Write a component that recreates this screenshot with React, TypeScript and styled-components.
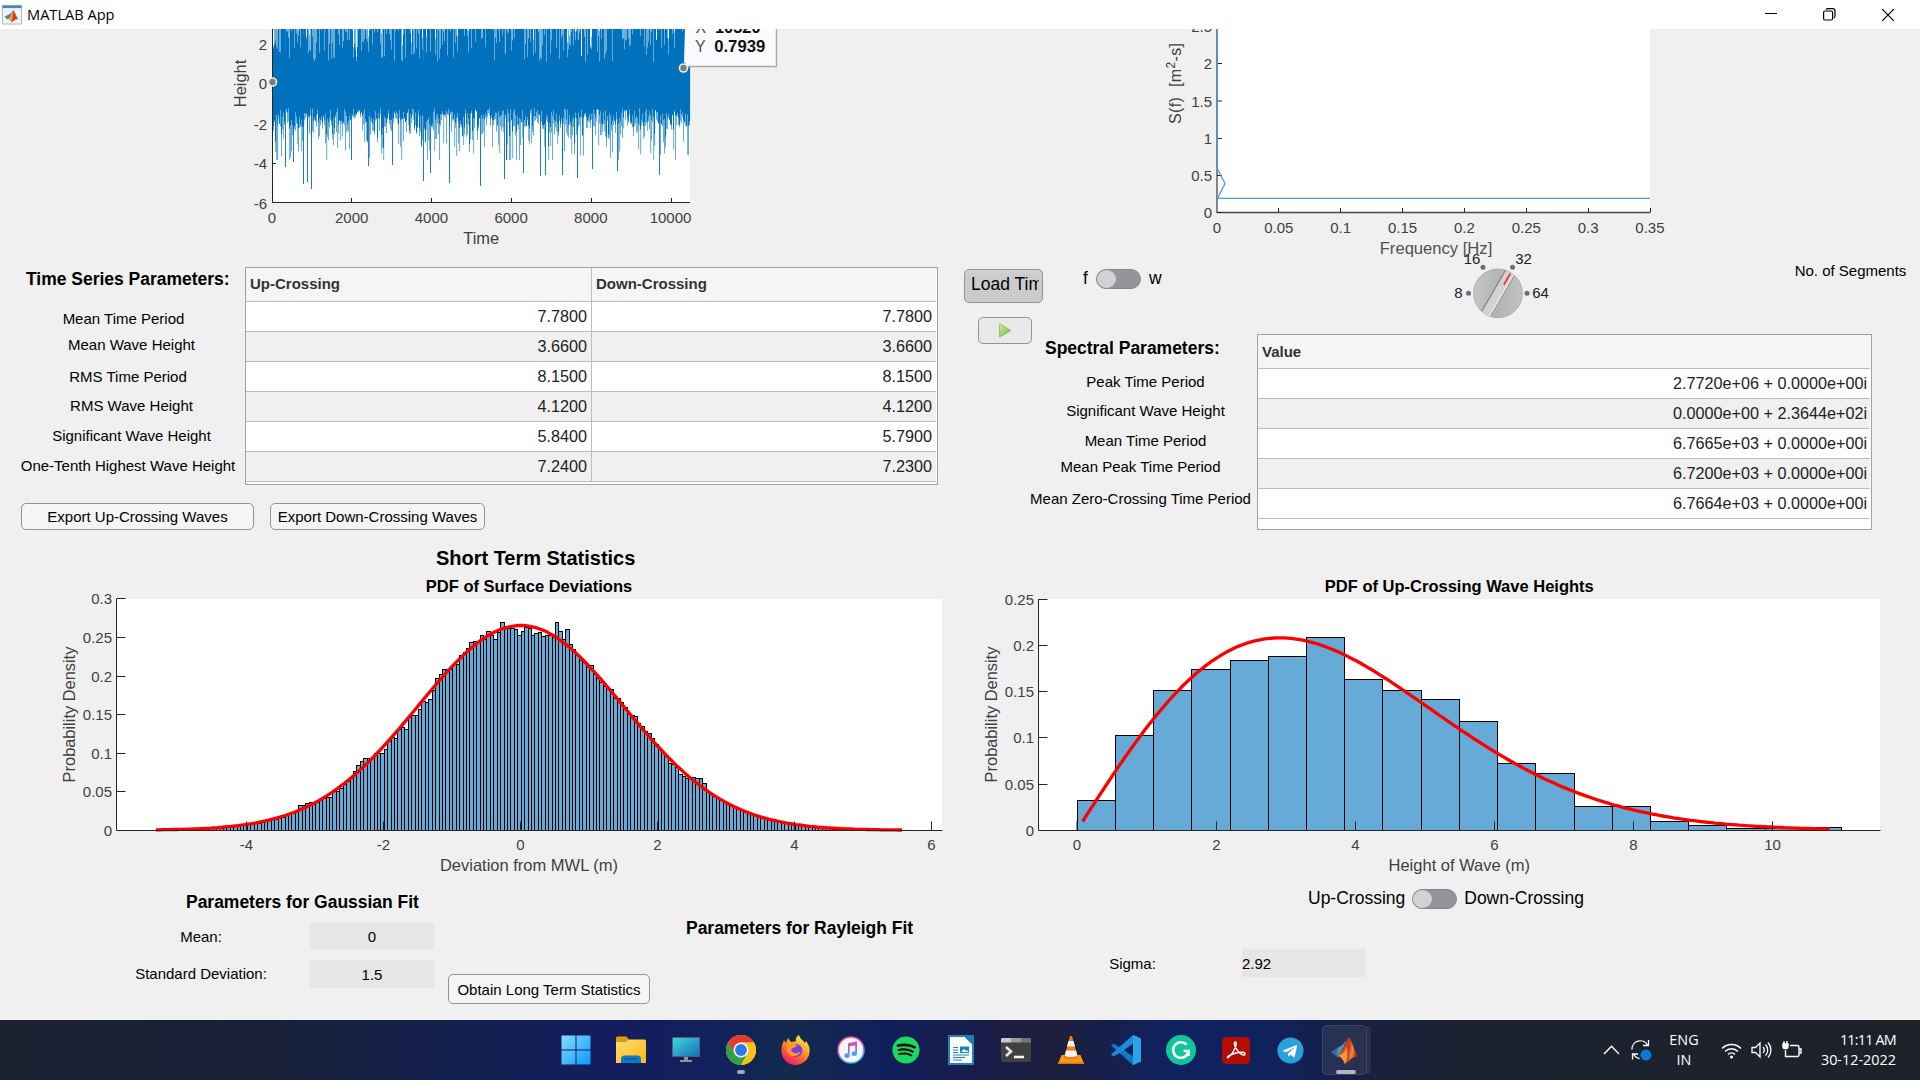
import React from "react";
import styled, { createGlobalStyle } from "styled-components";
import { FaSpotify, FaTelegram } from "react-icons/fa";

const Global = createGlobalStyle`
  * { box-sizing: border-box; }
  body { margin: 0; background: #f0f0f0; overflow: hidden; }
`;
const ARIAL = `"Liberation Sans", Arial, sans-serif`;
const SEGOE = `"Open Sans", "Noto Sans", sans-serif`;

const Screen = styled.div`
  width: 1920px; height: 1080px; display: flex; flex-direction: column;
  background: #f0f0f0; font-family: ${ARIAL}; font-size: 15px; color: #000; overflow: hidden;
`;
const TitleBar = styled.header`
  height: 29px; background: #fff; display: flex; align-items: center; padding-left: 2px;
  font-family: ${SEGOE}; font-size: 14.6px; flex: none; position: relative; z-index: 1;
`;
const TitleText = styled.span`margin-left: 5px; padding-bottom: 2px; letter-spacing: 0; flex: 1;`;
const WinButton = styled.span`width: 58.5px; height: 29px; display: flex; align-items: center; justify-content: center;`;
const Body = styled.main`height: 991px; display: flex; flex: none;`;
const Column = styled.section<{ $w: number }>`width: ${(p) => p.$w}px; display: flex; flex-direction: column; flex: none;`;
const Plot = styled.svg`display: block; overflow: visible; flex: none; font-family: ${ARIAL};`;
const Row = styled.div<{ $h?: number; $pl?: number; $pt?: number; $gap?: number }>`
  display: flex; align-items: flex-start; flex: none;
  height: ${(p) => (p.$h ? p.$h + "px" : "auto")};
  padding-left: ${(p) => p.$pl || 0}px; padding-top: ${(p) => p.$pt || 0}px; gap: ${(p) => p.$gap || 0}px;
`;
const Stack = styled.div<{ $w: number }>`width: ${(p) => p.$w}px; display: flex; flex-direction: column; flex: none;`;
const Heading = styled.h2<{ $size?: number; $mt?: number; $ml?: number }>`
  margin: ${(p) => p.$mt || 0}px 0 0 ${(p) => p.$ml || 0}px; font-weight: bold; white-space: nowrap;
  font-size: ${(p) => p.$size || 17.5}px; line-height: 24px; letter-spacing: -0.02px;
`;
const Label = styled.div<{ $w: number; $mt?: number }>`
  display: flex; justify-content: center; width: ${(p) => p.$w}px; margin-top: ${(p) => p.$mt || 0}px;
  line-height: 20px; white-space: nowrap;
`;
const LabelIndent = styled.span`width: 92px; flex: none;`;
const Table = styled.div<{ $w: number; $h: number; $cols: string; $lh: number; $pr: number }>`
  width: ${(p) => p.$w}px; height: ${(p) => p.$h}px; border: 1px solid #a2a2a2; background: #fff; flex: none;
  display: grid; grid-template-columns: ${(p) => p.$cols}; grid-template-rows: 34px; grid-auto-rows: 30px;
  overflow: hidden; padding-right: 1px; --head: ${(p) => p.$lh}px; --pad: ${(p) => p.$pr}px;
`;
const Th = styled.div<{ $last?: boolean }>`
  background: #f5f5f5; border-bottom: 1px solid #bdbdbd; border-right: ${(p) => (p.$last ? "0" : "1px solid #bdbdbd")};
  font-weight: bold; color: #333; font-size: 15px; line-height: var(--head); padding-left: 4px;
`;
const Td = styled.div<{ $alt: boolean; $last?: boolean }>`
  background: ${(p) => (p.$alt ? "#f0f0f0" : "#fff")}; border-bottom: 1px solid #bdbdbd;
  border-right: ${(p) => (p.$last ? "0" : "1px solid #bdbdbd")};
  text-align: right; color: #222; font-size: 16.2px; line-height: 28px; padding-right: var(--pad); white-space: nowrap;
`;
const Button = styled.button<{ $w: number; $h: number; $fs?: number; $bg?: string; $left?: boolean }>`
  width: ${(p) => p.$w}px; height: ${(p) => p.$h}px; border: 1px solid #949494; border-radius: 5px; flex: none;
  background: ${(p) => p.$bg || "#f5f5f5"}; font-family: ${ARIAL}; font-size: ${(p) => p.$fs || 15}px; color: #000;
  display: flex; align-items: center; justify-content: ${(p) => (p.$left ? "flex-start" : "center")};
  padding: 0 3px ${(p) => (p.$left ? 3 : 0)}px ${(p) => (p.$left ? 6 : 3)}px; white-space: nowrap; overflow: hidden;
`;
const Clip = styled.span`overflow: hidden; width: 69px; display: block; text-align: left;`;
const SwitchRow = styled.div<{ $gap: number }>`display: flex; align-items: center; gap: ${(p) => p.$gap}px; font-size: 17.5px; height: 20px; white-space: nowrap; line-height: 19px;`;
const SwitchText = styled.span`padding-bottom: 1px;`;
const Track = styled.span`
  width: 45px; height: 20px; border-radius: 10px; background: #949599; border: 1px solid #86878b; display: flex;
`;
const Thumb = styled.span`width: 19px; height: 18px; border-radius: 50%; background: #d1d2d4;`;
const Field = styled.div<{ $h: number; $left?: boolean }>`
  width: 124px; height: ${(p) => p.$h}px; background: #e6e6e6; line-height: ${(p) => p.$h + 1}px;
  text-align: ${(p) => (p.$left ? "left" : "center")};
`;
const Taskbar = styled.footer`
  height: 60px; flex: none; display: flex; align-items: center; padding-left: 548px; color: #fff;
  background: linear-gradient(90deg, #1b2130 0%, #182038 14%, #122053 26%, #131d5e 32%, #11225a 38%, #132a4c 41%, #101f5c 46%, #191c48 51%, #1d1e3c 55%, #0f2260 61%, #10225c 66%, #182040 71%, #1c2230 76%, #1d2229 100%);
  font-family: ${SEGOE}; font-size: 14.4px;
`;
const TaskItem = styled.span`
  width: 55px; height: 60px; display: flex; align-items: center; justify-content: center; flex: none; position: relative;
`;
const ActiveTile = styled.span`
  width: 45px; height: 50px; border-radius: 5px; background: rgba(255,255,255,0.08); margin-right: 2px;
  border: 1px solid rgba(255,255,255,0.1); display: flex; align-items: center; justify-content: center;
  box-shadow: 5px 0 0 -1px rgba(255,255,255,0.07);
`;
const Mark = styled.span<{ $w: number; $c: string }>`
  position: absolute; bottom: 6px; left: calc(50% - ${(p) => p.$w / 2}px); width: ${(p) => p.$w}px; height: 4px;
  border-radius: 2px; background: ${(p) => p.$c};
`;
const Tray = styled.div`display: flex; align-items: center; margin-left: 228px; height: 60px; svg { flex: none; }`;
const TrayText = styled.div<{ $w: number; $right?: boolean }>`
  width: ${(p) => p.$w}px; text-align: ${(p) => (p.$right ? "right" : "center")}; line-height: 20px; white-space: nowrap;
`;
const TrayCell = styled.span<{ $w: number }>`width: ${(p) => p.$w}px; display: flex; justify-content: center;`;
const Tight = styled.span`letter-spacing: -0.8px;`;

/* ---------- plot helpers ---------- */
const AX = "#262626";
const TICK = "#404040";
const T = ({ x, y, children, a = "middle", s = 15, b, c = TICK }: any) => (
  <text x={x} y={y} textAnchor={a} fontSize={s} fontWeight={b ? "bold" : "normal"} fill={c}>{children}</text>
);
const V = ({ x, y, children, s = 16.4, len }: any) => (
  <text transform={`translate(${x} ${y}) rotate(-90)`} textAnchor="middle" fontSize={s} fill={TICK} textLength={len}>{children}</text>
);

const rand = (() => { let s = 4242; return () => { s = (s * 1103515245 + 12345) % 2147483648; return s / 2147483648; }; })();
const deep: Record<number, number> = { 285: 167, 293: 162, 303: 184, 307: 182, 311: 189, 351: 160, 368: 166, 392: 165, 423: 181, 430: 173, 449: 183, 480: 186, 504: 179, 523: 173, 540: 176, 545: 175, 562: 175, 577: 178, 592: 169, 617: 171, 659: 175 };
const wave: { x: number; t: number; b: number }[] = [];
for (let x = 272; x < 690; x += 0.5) {
  const u = rand(), v = rand(), w = rand(), q = rand();
  const swell = 1 + 0.3 * Math.sin(x / 7.3) + 0.2 * Math.sin(x / 2.9 + 1);
  const b = deep[x] || Math.min(160, 108 + 17 * u * swell + (q > 0.45 ? 4 - Math.log(w + 0.001) * 12 * swell : 0));
  const t = v < 0.7 ? 29 : 29 + 33 * Math.pow(w, 1.3);
  wave.push({ x, t, b });
}

function TimePlot() {
  return (
    <Plot width={950} height={238} viewBox="0 29 950 238">
      <rect x={272} y={29} width={418} height={173} fill="#fff" />
      <path d={wave.map((w) => `M${w.x} ${w.t.toFixed(1)}h${deep[w.x] ? 0.9 : 0.6}V${w.b.toFixed(1)}H${w.x}z`).join("")} fill="#0072bd" />
      <rect x={272} y={62} width={418} height={44} fill="#0072bd" />
      <path d="M272.5 29V202.5H690" stroke={AX} fill="none" />
      {[351.5, 431.5, 511.5, 591.5, 671.5].map((x) => <path key={x} d={`M${x} 202v-4`} stroke={AX} />)}
      <path d="M272 163.5h4" stroke={AX} />
      {[0, 2000, 4000, 6000, 8000, 10000].map((n, i) => <T key={n} x={272 + i * 79.7} y={222.6}>{n}</T>)}
      {[[2, 50.4], [0, 89], [-2, 129.6], [-4, 168.6], [-6, 208.6]].map(([n, y]) => <T key={n} x={267} y={y} a="end">{n}</T>)}
      <T x={481.200} y={244} s={16.4}>Time</T>
      <V x={246} y={83.5}>Height</V>
      <path d="M685 29H776.5V66.5H688L684 62z" fill="#fbfbff" />
      <path d="M776.5 29V66.5H688" stroke="#a9a9ad" strokeWidth={1.4} fill="none" />
      <T x={695.500} y={32.5} a="start" s={16} c="#555">X</T>
      <T x={715} y={32.5} a="start" s={16.4} b c="#111">10320</T>
      <T x={695} y={52.3} a="start" s={16} c="#555">Y</T>
      <T x={714.2} y={52.3} a="start" s={16.7} b c="#111">0.7939</T>
      {[[272.5, 82], [683.5, 68]].map(([x, y]) => <circle key={x} cx={x} cy={y} r={4} fill="#7d7d7d" stroke="#f4f3d6" strokeWidth={1.6} />)}
    </Plot>
  );
}

function SpectrumPlot() {
  return (
    <Plot width={970} height={221} viewBox="950 29 970 221">
      <rect x={1217} y={29} width={433} height={183} fill="#fff" />
      <path d="M1217 29V212.5H1650.5" stroke="#404a54" strokeWidth={1.3} fill="none" />
      {[0, 1, 2, 3, 4, 5, 6, 7].map((i) => (
        <g key={i}>
          {i > 0 && <path d={`M${1216.5 + i * 62} 212v-4`} stroke={AX} />}
          <T x={1217 + i * 61.85} y={232.6}>{["0", "0.05", "0.1", "0.15", "0.2", "0.25", "0.3", "0.35"][i]}</T>
        </g>
      ))}
      {[["0", 212.5], ["0.5", 175.5], ["1", 138.5], ["1.5", 101], ["2", 63.5], ["2.5", 26.5]].map(([n, y]: any) => (
        <g key={n}><path d={`M1217 ${y}h5`} stroke={AX} /><T x={1212} y={y + 5.9} a="end">{n}</T></g>
      ))}
      <path d="M1217.3 29V168.5L1225 183.5L1217.5 198.4H1650" stroke="#4a9fd4" strokeWidth={1.3} fill="none" />
      <T x={1436} y={253.800} s={16.6} c="#505050">Frequency [Hz]</T>
      <text transform="translate(1181 83.5) rotate(-90)" textAnchor="middle" fontSize={16} fill={TICK} xmlSpace="preserve" textLength={81}>
        S(f)&#160; [m<tspan dy={-6} fontSize={12}>2</tspan><tspan dy={6}>-s]</tspan>
      </text>
    </Plot>
  );
}

const special: Record<number, number> = {
  [-65]: .0337, [-64]: .0337, [-63]: .0355, [-62]: .0368, [-57]: .044, [-56]: .044, [-55]: .0515, [-54]: .0515, [-53]: .055,
  [-49]: .0778, [-48]: .0856, [-47]: .0895, [-46]: .0934, [-45]: .0934, [-44]: .0934, [-43]: .1, [-42]: .1, [-41]: .1, [-40]: .106,
  [-37]: .1206, [-35]: .1345, [-34]: .132, [-32]: .15, [-31]: .15, [-30]: .158, [-29]: .168, [-28]: .167, [-27]: .171, [-26]: .182,
  [-25]: .198, [-24]: .2035, [-23]: .21, [-22]: .209, [-21]: .21, [-20]: .216, [-19]: .216, [-18]: .227, [-17]: .232, [-16]: .237,
  [-15]: .245, [-14]: .246, [-13]: .2455, [-12]: .254, [-11]: .249, [-10]: .2594, [-9]: .253, [-8]: .248, [-7]: .257, [-6]: .271,
  [-5]: .2625, [-4]: .2625, [-3]: .263, [-2]: .261, [-1]: .254, 0: .2594, 1: .264, 2: .262, 3: .254, 4: .2565, 5: .258, 6: .2517, 7: .253, 8: .253,
  9: .2513, 10: .27, 11: .2594, 12: .248, 13: .261, 14: .2415, 15: .236, 16: .2275, 17: .221, 18: .219, 19: .212, 20: .215, 21: .203,
  22: .1976, 23: .193, 24: .187, 25: .185, 26: .184, 27: .1716, 28: .1725, 29: .167, 30: .16, 31: .152, 32: .15, 33: .148, 34: .14,
  35: .136, 36: .129, 37: .126, 38: .12, 43: .0873, 44: .0857, 45: .0826, 46: .0727, 47: .0713, 48: .068, 49: .068, 50: .069, 51: .068, 52: .0675, 53: .061,
};
const gauss = (v: number) => 0.2655 * Math.exp((-v * v) / 4.5);
const BASE = 830.5;

function Axes({ x0, x1, ys, step, xs, title, xlabel, cx }: any) {
  return (
    <g>
      <path d={`M${x0} 599V${BASE}H${x1}`} stroke={AX} fill="none" />
      {ys.map((n: string, i: number) => (
        <g key={n}>
          {i > 0 && <path d={`M${x0} ${Math.round(BASE - i * step - 0.5) + 0.5}h9`} stroke={AX} />}
          <T x={x0 - 4.5} y={BASE - i * step + 5.5} a="end">{n}</T>
        </g>
      ))}
      {xs.map(([n, x]: any) => (
        <g key={n}><path d={`M${x} ${BASE}v-9`} stroke={AX} /><T x={x} y={850}>{n}</T></g>
      ))}
      <T x={cx} y={592} s={16.5} b c="#000">{title}</T>
      <T x={cx} y={871} s={16.5}>{xlabel}</T>
      <V x={x0 - 41.5} y={714.5}>Probability Density</V>
    </g>
  );
}

function GaussianPlot() {
  const bars = [];
  for (let k = -107; k < 112; k++) {
    const v = special[k] ?? gauss((k + 0.5) * 0.05);
    const l = Math.round(520.7 + k * 3.4225), r = Math.round(520.7 + (k + 1) * 3.4225);
    const top = Math.round(BASE - v * 771);
    bars.push(<rect key={k} x={l + 0.5} y={top + 0.5} width={r - l} height={Math.max(0, 830 - top)} fill="#66aad7" stroke="#000" />);
  }
  let d = "";
  for (let v = -5.33; v <= 5.6; v += 0.05) d += `${d ? "L" : "M"}${(520.7 + v * 68.45).toFixed(1)} ${(830.2 - gauss(v) * 771).toFixed(1)}`;
  return (
    <Plot width={950} height={315} viewBox="0 570 950 315">
      <rect x={117} y={599} width={825} height={231} fill="#fff" />
      {bars}
      <path d={d} stroke="#f00" strokeWidth={3.3} fill="none" />
      <Axes x0={116.5} x1={942.5} step={38.6} ys={["0", "0.05", "0.1", "0.15", "0.2", "0.25", "0.3"]}
        xs={[["-4", 246.5], ["-2", 383.5], ["0", 520.5], ["2", 657.5], ["4", 794.5], ["6", 931.5]]}
        title="PDF of Surface Deviations" xlabel="Deviation from MWL (m)" cx={529} />
    </Plot>
  );
}

function RayleighPlot() {
  const tops = [721, 526, 391, 328, 301, 289, 232, 358, 391, 418, 484, 610, 640, 739, 739, 784, 796, 804, 805, 802];
  let d = "";
  for (let v = 0.08; v <= 10.88; v += 0.05) {
    const p = (v / 8.5264) * Math.exp((-v * v) / 17.0528);
    d += `${d ? "L" : "M"}${(1077 + v * 69.5).toFixed(1)} ${(830.2 - p * 926).toFixed(1)}`;
  }
  return (
    <Plot width={970} height={315} viewBox="950 570 970 315">
      <rect x={1038} y={599} width={842} height={231} fill="#fff" />
      {tops.map((t, i) => {
        const l = Math.round(1076.7 + i * 38.22), r = Math.round(1076.7 + (i + 1) * 38.22), y = Math.floor(560 + t / 3);
        return <rect key={i} x={l + 0.5} y={y + 0.5} width={r - l} height={830 - y} fill="#66aad7" stroke="#000" />;
      })}
      <path d={d} stroke="#f00" strokeWidth={3.3} fill="none" />
      <Axes x0={1038.5} x1={1880.5} step={46.3} ys={["0", "0.05", "0.1", "0.15", "0.2", "0.25"]}
        xs={[["0", 1077], ["2", 1216.5], ["4", 1355.5], ["6", 1494.5], ["8", 1633.5], ["10", 1772.5]]}
        title="PDF of Up-Crossing Wave Heights" xlabel="Height of Wave (m)" cx={1459.3} />
    </Plot>
  );
}

function Knob() {
  return (
    <Plot width={130} height={84} viewBox="1440 250 130 84">
      <defs>
        <linearGradient id="kn" x1="0" x2="1"><stop offset="0" stopColor="#c4c5c7" /><stop offset="0.5" stopColor="#b4b5b7" /><stop offset="1" stopColor="#c0c1c3" /></linearGradient>
        <clipPath id="kc"><circle cx={1499} cy={293.3} r={24.4} /></clipPath>
      </defs>
      <circle cx={1499} cy={293.3} r={24.4} fill="url(#kn)" stroke="#a6a7a9" strokeWidth={0.8} />
      <g clipPath="url(#kc)">
        <g transform="rotate(30 1499 293.3)">
          <rect x={1494} y={266} width={10} height={55} fill="#d1d2d4" />
          <path d="M1494 266v55" stroke="#77787b" strokeWidth={1} />
          <path d="M1504 266v55" stroke="#8a8b8e" strokeWidth={1} />
          <path d="M1503 266v55" stroke="#f4f4f4" strokeWidth={1} />
          <path d="M1499.8 270v13" stroke="#ee3535" strokeWidth={1.7} />
        </g>
      </g>
      {[[1469.5, 293.2], [1484, 267.3], [1513.5, 267.3], [1528, 293.2]].map(([x, y]) => <circle key={x} cx={x} cy={y} r={2.5} fill="#6d6e71" />)}
      <T x={1459.5} y={298.2} c="#222">8</T><T x={1541.5} y={298.2} c="#222">64</T>
      <T x={1473} y={264} c="#222">16</T><T x={1524.5} y={264} c="#222">32</T>
    </Plot>
  );
}

/* ---------- icons ---------- */
const Membrane = ({ s }: { s: number }) => (
  <svg width={s} height={s} viewBox="0 0 32 32">
    <defs><linearGradient id="mm" x1="0" x2="1" y1="0" y2="0.2"><stop offset="0.3" stopColor="#7a1d10" /><stop offset="0.62" stopColor="#d9431f" /><stop offset="0.75" stopColor="#f58a3c" /><stop offset="1" stopColor="#8f1f14" /></linearGradient></defs>
    <path d="M1 18l8-5c3-1 5-3 7-6l-3 15-5 2z" fill="#2f6f9f" />
    <path d="M9 13c4-1 6-4 8-8l-3 14-4 3-3-2z" fill="#5aa5cf" opacity=".7" />
    <path d="M8 22c5-1 8-16 12-20 3 2 6 17 11 22-4-1-7-1-10 3l-5 4c-2-5-4-8-8-9z" fill="url(#mm)" />
    <path d="M16 31c2-6 2-16 3-26-3 5-6 16-11 17 4 1 6 4 8 9z" fill="#c9531f" />
    <path d="M16 31c3-4 3-12 2-18-2 4-4 8-10 9 4 1 6 4 8 9z" fill="#f7a83c" opacity=".85" />
  </svg>
);
const MatlabTitle = () => (
  <svg width={20} height={20} viewBox="0 0 20 20">
    <rect x={0.5} y={0.5} width={19} height={18.5} fill="#f1f3f5" stroke="#b4bac0" />
    <rect x={0.5} y={0.5} width={19} height={2.6} fill="#4a86b4" />
    <g transform="translate(2 4.3) scale(.47 .42)"><path d="M1 18l8-5c3-1 5-3 7-6l-3 15-5 2z" fill="#3d84b5" /><path d="M8 22c5-1 8-16 12-20 3 2 6 17 11 22-4-1-7-1-10 3l-5 4c-2-5-4-8-8-9z" fill="#c8401c" /><path d="M16 31c3-6 3-22 4-29-4 6-7 19-12 20 4 1 6 4 8 9z" fill="#f39a3c" /></g>
  </svg>
);
const Windows = () => (
  <svg width={30} height={30} viewBox="0 0 30 30">
    <defs><linearGradient id="wn" x1="0" y1="0" x2="1" y2="1" ><stop offset="0" stopColor="#86dcff" /><stop offset="1" stopColor="#0a98fa" /></linearGradient></defs>
    <path fill="url(#wn)" d="M.5.5h14v14H.5zM15.5.5h14v14h-14zM.5 15.5h14v14H.5zM15.5 15.5h14v14h-14z" />
  </svg>
);
const Folder = () => (
  <svg width={30} height={28} viewBox="0 0 30 28">
    <defs><linearGradient id="fo" x1="0" y1="0" x2="1" y2="1"><stop offset="0" stopColor="#ffdc73" /><stop offset="1" stopColor="#fdb912" /></linearGradient></defs>
    <path d="M0 2a1.5 1.5 0 0 1 1.500-1.500h9L13 3.500V8H0z" fill="#dd9b05" />
    <path d="M0 6h10l3-2.500h15.500a1.500 1.500 0 0 1 1.500 1.500V27H0z" fill="url(#fo)" />
    <path d="M5 27v-4a3.500 3.500 0 0 1 3.500-3.500h13A3.500 3.500 0 0 1 25 23v4z" fill="#1177c4" /><path d="M8.500 23h13" stroke="#07508f" />
  </svg>
);
const Monitor = () => (
  <svg width={28} height={26} viewBox="0 0 28 26">
    <defs><linearGradient id="mo" x1="0" y1="0" x2="1" y2="1"><stop offset="0" stopColor="#3cd7e0" /><stop offset="1" stopColor="#1570b8" /></linearGradient></defs>
    <rect width={28} height={20} rx={1} fill="#53606b" /><rect x={1} y={1} width={26} height={18} fill="url(#mo)" />
    <path d="M12 20h4v3h4v2H8v-2h4z" fill="#8b949b" />
  </svg>
);
const Chrome = () => (
  <svg width={30} height={30} viewBox="0 0 48 48">
    <circle cx={24} cy={24} r={24} fill="#fbc116" />
    <path d="M24 12h20.800A24 24 0 0 0 3.200 12L13 30z" fill="#e33b2e" />
    <path d="M3.200 12A24 24 0 0 0 24 48L34.400 30 24 24 13.600 30z" fill="#2da14c" />
    <path d="M24 48A24 24 0 0 0 44.800 12H24L34.400 30z" fill="#fbc116" />
    <circle cx={24} cy={24} r={12} fill="#fff" /><circle cx={24} cy={24} r={9.500} fill="#2a7bea" />
  </svg>
);
const Firefox = () => (
  <svg width={29} height={30} viewBox="0 0 29 30">
    <defs><linearGradient id="ff" x1="0.8" y1="0" x2="0.2" y2="1"><stop offset="0" stopColor="#fff34a" /><stop offset="0.4" stopColor="#ffa02a" /><stop offset="0.75" stopColor="#ff4540" /><stop offset="1" stopColor="#e0128a" /></linearGradient></defs>
    <path d="M18 0c1 4 4 5 6 8l1-2c3 4 4 7 3.500 11A14 14 0 0 1 .5 15C.5 11 2 8 3 5l2 3 2-5 3 4c2-1 5-.5 5-.5C14 4 16 1 18 0z" fill="url(#ff)" />
    <circle cx={15} cy={15.500} r={6.500} fill="#7a3fe0" /><path d="M6 9c4-2 7 0 10 1-1 3-5 2-6 5 2 4 7 4 10 1-2 6-10 7-13 2-2-3-2-6-1-9z" fill="#ff9a2a" />
  </svg>
);
const Music = () => (
  <svg width={28} height={28} viewBox="0 0 28 28">
    <defs><linearGradient id="mu" x1="0" y1="0" x2="0.3" y2="1"><stop offset="0" stopColor="#fb4c6e" /><stop offset="0.55" stopColor="#b45be0" /><stop offset="1" stopColor="#2fb4f4" /></linearGradient></defs>
    <circle cx={14} cy={14} r={13} fill="#f7f7fa" stroke="url(#mu)" strokeWidth={1.600} />
    <path d="M11 7.200l9-2V17.500a2.700 2.300 0 1 1-1.800-2V9.200l-5.500 1.200v9.100a2.700 2.300 0 1 1-1.700-2z" fill="url(#mu)" />
  </svg>
);
const Writer = () => (
  <svg width={26} height={30} viewBox="0 0 26 30">
    <path d="M1 1h16l8 8v20H1z" fill="#fff" stroke="#1a84bb" strokeWidth={2} /><path d="M17 0h9v9z" fill="#1b7fb8" />
    <path d="M5 12.500h5M5 15h5M5 17.500h5M5 20h16M5 22.500h12M5 25h9" stroke="#1a84bb" strokeWidth={1.200} /><path d="M12 11.500h9v6.500h-9z" fill="#1a84bb" /><path d="M13 17l3-3 2 2 1-1 1.500 2z" fill="#fff" />
  </svg>
);
const Terminal = () => (
  <svg width={30} height={24} viewBox="0 0 30 24">
    <rect width={30} height={24} rx={1.500} fill="#414141" /><path d="M0 4.500V1.500A1.500 1.500 0 0 1 1.500 0h8.500v4.500z" fill="#c8c8c8" /><path d="M10 0h10v4.500H10z" fill="#9a9a9a" /><path d="M20 0h8.500A1.500 1.500 0 0 1 30 1.500v3H20z" fill="#747474" />
    <path d="M5 9l5 4.500L5 18" stroke="#e8e8e8" strokeWidth={2.600} fill="none" /><path d="M13 19h10" stroke="#f5f5f5" strokeWidth={2.600} />
  </svg>
);
const Vlc = () => (
  <svg width={26} height={30} viewBox="0 0 26 30">
    <path d="M3.500 20h19L26 29H0z" fill="#f89b1c" /><path d="M0 27.500h26V29H0z" fill="#d9780a" />
    <path d="M12 1h2l6 22c-3 2-11 2-14 0z" fill="#f07f10" /><path d="M10.500 6h5l1.500 5.500H9zM8 15.500h10l1.300 5c-4 2-9 2-12.600 0z" fill="#f3f3f3" />
  </svg>
);
const Code = () => (
  <svg width={30} height={30} viewBox="0 0 30 30">
    <path d="M0 10.500l2.500-2L30 24v2l-8 4z" fill="#0f79c4" /><path d="M0 19.500L22 0l8 4v2L2.500 21.500z" fill="#1c8ddb" />
    <path d="M22 0l8 3.600v22.800L22 30z" fill="#2ba3ee" /><path d="M22 8.500v13L13 15z" fill="#13205c" />
  </svg>
);
const Grammarly = () => (
  <svg width={30} height={30} viewBox="0 0 30 30">
    <circle cx={15} cy={15} r={15} fill="#12c49a" /><path d="M20.500 9.500A7.800 7.800 0 1 0 22.700 16H17.500" stroke="#fff" strokeWidth={2.500} fill="none" /><path d="M19 16h3.700v5" stroke="#fff" strokeWidth={2} fill="none" />
  </svg>
);
const Acrobat = () => (
  <svg width={28} height={27} viewBox="0 0 28 27">
    <rect width={28} height={27} rx={4.500} fill="#b30c00" />
    <path d="M6 20.500c2.500-1.500 8-8 8.300-14 0-2-2-2-2 0C12.500 11 18 17.500 21.500 18c2 0 2-2.500-.5-2.700-4-.3-9 1-13.500 3.200-2.500 1.500-2.500 2.500-1.500 2z" fill="none" stroke="#fff" strokeWidth={1.500} />
  </svg>
);
const Sync = () => (
  <svg width={22} height={24} viewBox="0 0 22 24" fill="none" stroke="#fff" strokeWidth={1.300}>
    <path d="M2 11.500A8.300 8.300 0 0 1 17.500 7M18.500 2v5.500H13M9.500 20.500A8 8 0 0 1 3.500 16M2.500 21.500V16H8" /><circle cx={16} cy={17} r={5.500} fill="#0a78d6" stroke="none" />
  </svg>
);
const Wifi = () => (
  <svg width={21} height={17} viewBox="0 0 21 17" fill="none" stroke="#fff" strokeWidth={1.400}>
    <path d="M1 6.500a13.300 13.300 0 0 1 19 0M4 9.600a9 9 0 0 1 13 0M7 12.500a5 5 0 0 1 7 0" /><circle cx={10.500} cy={15} r={1.500} fill="#fff" stroke="none" />
  </svg>
);
const Volume = () => (
  <svg width={21} height={18} viewBox="0 0 21 18" fill="none" stroke="#fff" strokeWidth={1.300}>
    <path d="M1 6.500h3.500L9 2v14l-4.500-4.500H1zM12 6a4.500 4.500 0 0 1 0 6M14.500 3.500a8 8 0 0 1 0 11M17 1.500a11 11 0 0 1 0 15" />
  </svg>
);
const Battery = () => (
  <svg width={21} height={18} viewBox="0 0 21 18" fill="none" stroke="#fff" strokeWidth={1.400}>
    <path d="M9 4.500h7.500a1.500 1.500 0 0 1 1.500 1.500v8a1.500 1.500 0 0 1-1.500 1.500H4.500V9M18.500 8h1.500v4h-1.500" /><path d="M2 3h5v3a1.500 1.500 0 0 1-1.500 1.500h-2A1.500 1.500 0 0 1 2 6zM3 0v3M6 0v3" fill="#fff" />
  </svg>
);

function Switch({ a, b, gap = 7 }: { a: string; b: string; gap?: number }) {
  return <SwitchRow $gap={gap}><SwitchText>{a}</SwitchText><Track><Thumb /></Track><SwitchText>{b}</SwitchText></SwitchRow>;
}

const upDown = [["7.7800", "7.7800"], ["3.6600", "3.6600"], ["8.1500", "8.1500"], ["4.1200", "4.1200"], ["5.8400", "5.7900"], ["7.2400", "7.2300"]];
const spectral = ["2.7720e+06 + 0.0000e+00i", "0.0000e+00 + 2.3644e+02i", "6.7665e+03 + 0.0000e+00i", "6.7200e+03 + 0.0000e+00i", "6.7664e+03 + 0.0000e+00i"];

export default function App() {
  return (
    <Screen>
      <Global />
      <TitleBar>
        <MatlabTitle /><TitleText>MATLAB App</TitleText>
        <WinButton><svg width={12} height={12}><path d="M0 4.500h12" stroke="#000" /></svg></WinButton>
        <WinButton><svg width={13} height={13} fill="none" stroke="#000" strokeWidth={1.200}><rect x={0.600} y={3} width={9} height={9} rx={1.500} /><path d="M3 1.500Q3.500.6 5 .6h4.500Q12 .6 12 3v5q0 1.500-1 2" /></svg></WinButton>
        <WinButton><svg width={12} height={12}><path d="M0 0L12 12M12 0L0 12" stroke="#000" strokeWidth={1.200} /></svg></WinButton>
        <Row $pl={3} />
      </TitleBar>
      <Body>
        <Column $w={950}>
          <TimePlot />
          <Row $h={218}>
            <Stack $w={245}>
              <Heading $ml={26}>Time Series Parameters:</Heading>
              <Label $w={247} $mt={18}>Mean Time Period</Label>
              <Label $w={263} $mt={6}>Mean Wave Height</Label>
              <Label $w={256} $mt={12}>RMS Time Period</Label>
              <Label $w={263} $mt={9}>RMS Wave Height</Label>
              <Label $w={263} $mt={10}>Significant Wave Height</Label>
              <Label $w={256} $mt={10}>One-Tenth Highest Wave Height</Label>
            </Stack>
            <Table $w={693} $h={218} $cols="346px 1fr" $lh={32} $pr={4}>
              <Th>Up-Crossing</Th><Th $last>Down-Crossing</Th>
              {upDown.map(([a, b], i) => [
                <Td key={`a${i}`} $alt={i % 2 === 1}>{a}</Td>,
                <Td key={`b${i}`} $alt={i % 2 === 1} $last>{b}</Td>,
              ])}
            </Table>
          </Row>
          <Row $pl={21} $pt={18} $gap={16}>
            <Button $w={233} $h={27}>Export Up-Crossing Waves</Button>
            <Button $w={215} $h={27}>Export Down-Crossing Waves</Button>
          </Row>
          <Heading $size={20} $mt={16} $ml={436}>Short Term Statistics</Heading>
          <GaussianPlot />
          <Row>
            <Stack $w={448}>
              <Heading $mt={5} $ml={186}>Parameters for Gaussian Fit</Heading>
              <Row $pt={9}><Label $w={310} $mt={4}><LabelIndent />Mean:</Label><Field $h={27}>0</Field></Row>
              <Row $pt={10}><Label $w={310} $mt={4}><LabelIndent />Standard Deviation:</Label><Field $h={28}>1.5</Field></Row>
            </Stack>
            <Row $pt={89}><Button $w={202} $h={30}>Obtain Long Term Statistics</Button></Row>
            <Heading $mt={31} $ml={36}>Parameters for Rayleigh Fit</Heading>
          </Row>
        </Column>
        <Column $w={970}>
          <SpectrumPlot />
          <Row $h={320}>
            <Stack $w={96}>
              <Row $pl={14} $pt={19}><Button $w={79} $h={34} $fs={17.500} $left $bg="linear-gradient(#d6d6d6,#cbcbcb 15%,#cbcbcb)"><Clip>Load Time</Clip></Button></Row>
              <Row $pl={28} $pt={14}><Button $w={54} $h={27} $bg="#e9e9e9">
                <svg width={13} height={15}><defs><linearGradient id="pl" x2="1" y2="1"><stop offset="0" stopColor="#d8f0a8" /><stop offset="1" stopColor="#5fb82a" /></linearGradient></defs><path d="M.6.800L12 7.500.6 14.200z" fill="url(#pl)" stroke="#86bd53" strokeWidth={0.800} /></svg>
              </Button></Row>
            </Stack>
            <Stack $w={874}>
              <Row $h={84}>
                <Row $pl={37} $pt={19}><Switch a="f" b="w" gap={8} /></Row>
                <Row $pl={277}><Knob /></Row>
                <Row $pl={226} $pt={11}><Label $w={112}>No. of Segments</Label></Row>
              </Row>
              <Row>
                <Stack $w={211}>
                  <Heading $mt={2} $ml={-1}>Spectral Parameters:</Heading>
                  <Label $w={199} $mt={12}>Peak Time Period</Label>
                  <Label $w={199} $mt={9}>Significant Wave Height</Label>
                  <Label $w={199} $mt={10}>Mean Time Period</Label>
                  <Label $w={189} $mt={6}>Mean Peak Time Period</Label>
                  <Label $w={189} $mt={12}>Mean Zero-Crossing Time Period</Label>
                </Stack>
                <Table $w={615} $h={196} $cols="1fr" $lh={33} $pr={3}>
                  <Th $last>Value</Th>
                  {spectral.map((v, i) => <Td key={i} $alt={i % 2 === 1} $last>{v}</Td>)}
                </Table>
              </Row>
            </Stack>
          </Row>
          <RayleighPlot />
          <Row $pl={358} $pt={4}><Switch a="Up-Crossing" b="Down-Crossing" /></Row>
          <Row $pl={160} $pt={40}>
            <Label $w={45} $mt={5}>Sigma:</Label>
            <Row $pl={87}><Field $h={28} $left>2.92</Field></Row>
          </Row>
        </Column>
      </Body>
      <Taskbar>
        <TaskItem><Windows /></TaskItem><TaskItem><Folder /></TaskItem><TaskItem><Monitor /></TaskItem>
        <TaskItem><Chrome /><Mark $w={8} $c="#a3a9c0" /></TaskItem>
        <TaskItem><Firefox /></TaskItem><TaskItem><Music /></TaskItem>
        <TaskItem><svg width={28} height={28}><circle cx={14} cy={14} r={12} fill="#111" /><FaSpotify size={28} color="#1ed760" /></svg></TaskItem>
        <TaskItem><Writer /></TaskItem><TaskItem><Terminal /></TaskItem><TaskItem><Vlc /></TaskItem><TaskItem><Code /></TaskItem><TaskItem><Grammarly /></TaskItem><TaskItem><Acrobat /></TaskItem>
        <TaskItem><svg width={27} height={27}><circle cx={13.500} cy={13.500} r={12} fill="#fff" /><FaTelegram size={27} color="#2ba0dc" /></svg></TaskItem>
        <TaskItem><ActiveTile><Membrane s={30} /></ActiveTile><Mark $w={20} $c="#b4b6bd" /></TaskItem>
        <Tray>
          <TrayCell $w={20}><svg width={17} height={10}><path d="M1 9L8.500 1.200 16 9" stroke="#fff" strokeWidth={1.400} fill="none" /></svg></TrayCell>
          <TrayCell $w={40}><Sync /></TrayCell>
          <TrayText $w={46}>ENG<br />IN</TrayText>
          <TrayCell $w={48}><Wifi /></TrayCell><TrayCell $w={12}><Volume /></TrayCell><TrayCell $w={48}><Battery /></TrayCell>
          <TrayText $w={81} $right><Tight>11:11 AM</Tight><br />30-12-2022</TrayText>
        </Tray>
      </Taskbar>
    </Screen>
  );
}
